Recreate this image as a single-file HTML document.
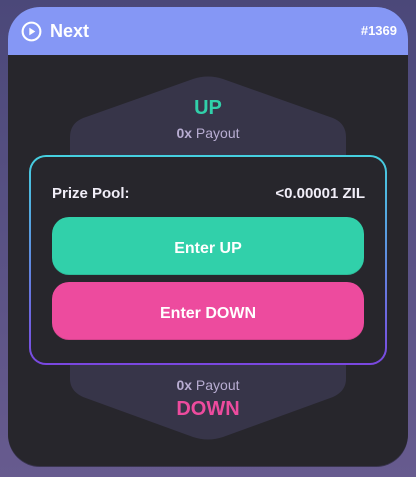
<!DOCTYPE html>
<html><head><meta charset="utf-8"><style>
*{margin:0;padding:0;box-sizing:border-box}
body{width:416px;height:477px;overflow:hidden;background:linear-gradient(#4b4879,#675b8f);font-family:"Liberation Sans",sans-serif;position:relative}
.card{position:absolute;left:8px;top:7px;width:400px;height:459px;border-radius:32px;background:#27262c;overflow:hidden;box-shadow:0 1px 0 #3a3550}
.hdr{height:48px;background:#8597f5;color:#fff;position:relative}
.hdr .t{position:absolute;left:42px;top:14px;font-size:18px;font-weight:bold}
.hdr .n{position:absolute;right:11px;top:16px;font-size:13px;font-weight:bold}
.ic{position:absolute;left:13px;top:14px;width:21px;height:21px}
svg.sh{position:absolute;left:0;top:0}
.lbl{position:absolute;width:400px;text-align:center;font-weight:bold}
.box{position:absolute;left:21px;top:148px;width:358px;height:210px;border-radius:17px;padding:2px;background:linear-gradient(#45d0e0,#7a47e0)}
.inner{width:100%;height:100%;border-radius:15px;background:#27262c;position:relative}
.pp{position:absolute;top:28px;font-size:15px;font-weight:bold;color:#f1eef8}
.btn{position:absolute;left:21px;width:312px;height:58px;border-radius:17px;color:#fff;font-weight:bold;font-size:16px;text-align:center;line-height:64px}
</style></head><body>
<div class="card">
<svg class="sh" width="400" height="459">
<path d="M62 130 Q62 115 78 110 L185 72 Q200 67 215 72 L322 110 Q338 115 338 130 L338 160 L62 160 Z" fill="#373549"/>
<path d="M62 350 L338 350 L338 372 Q338 384 325 390 L215 430 Q200 435 185 430 L75 390 Q62 384 62 372 Z" fill="#373549"/>
</svg>
<div class="hdr">
<svg class="ic" viewBox="0 0 22 22"><circle cx="11" cy="11" r="9.3" fill="none" stroke="#fff" stroke-width="2.2"/><path d="M8.7 7 L15 11 L8.7 15 Z" fill="#fff"/></svg>
<div class="t">Next</div><div class="n">#1369</div></div>
<div class="lbl" style="top:90px;font-size:20px;color:#31d0aa">UP</div>
<div class="lbl" style="top:118px;font-size:14px;color:#b8add2;font-weight:normal"><b>0x</b> Payout</div>
<div class="lbl" style="top:370px;font-size:14px;color:#b8add2;font-weight:normal"><b>0x</b> Payout</div>
<div class="lbl" style="top:391px;font-size:20px;color:#ed4b9e">DOWN</div>
<div class="box"><div class="inner">
<div class="pp" style="left:21px">Prize Pool:</div>
<div class="pp" style="right:20px">&lt;0.00001 ZIL</div>
<div class="btn" style="top:60px;background:#31d0aa;box-shadow:0 -1px 0 rgba(0,0,0,.1) inset">Enter UP</div>
<div class="btn" style="top:125px;background:#ed4b9e;box-shadow:0 -1px 0 rgba(0,0,0,.1) inset">Enter DOWN</div>
</div></div>
</div>
</body></html>
